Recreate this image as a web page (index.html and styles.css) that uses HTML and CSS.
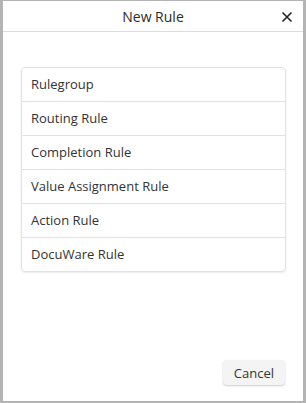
FILE: index.html
```html
<!DOCTYPE html>
<html lang="en">
<head>
    <meta charset="UTF-8">
    <meta name="viewport" content="width=device-width, initial-scale=1.0">
    <title>New Rule</title>
    <link rel="stylesheet" href="styles.css">
</head>
<body>
<div class="dialog">
    <div class="dialog-header">
        <span class="dialog-title">New Rule</span>
        <button class="close-button" title="Close">
            <svg width="12" height="12" viewBox="0 0 12 12"><path d="M1.5 1.5 L10.5 10.5 M10.5 1.5 L1.5 10.5" stroke="#222" stroke-width="1.6" fill="none"/></svg>
        </button>
    </div>

    <div class="dialog-body">
        <ul class="rule-list">
            <li>Rulegroup</li>
            <li>Routing Rule</li>
            <li>Completion Rule</li>
            <li>Value Assignment Rule</li>
            <li>Action Rule</li>
            <li>DocuWare Rule</li>
        </ul>
    </div>

    <div class="dialog-footer">
        <button class="cancel-button">Cancel</button>
    </div>
</div>
</body>
</html>
```

FILE: styles.css
```css
html, body { height: 100%; }
body { margin: 0; background: #b4b4b4; font-family: "Open Sans", Arial, sans-serif; color: #333; box-sizing: border-box; padding: 1px 3px 2px 3px; }
.dialog { height: 100%; background: #fff; display: flex; flex-direction: column; }
.dialog-header {
    position: relative;
    height: 30px;
    border-bottom: 1px solid #dcdcdc;
    display: flex;
    align-items: center;
    justify-content: center;
}
.dialog-title { font-size: 14px; font-weight: 400; color: #2b2b2b; }
.close-button {
    position: absolute;
    right: 8px;
    top: 8px;
    width: 16px;
    height: 16px;
    padding: 0;
    border: none;
    background: none;
    display: flex;
    align-items: center;
    justify-content: center;
    cursor: pointer;
}
.dialog-body { flex: 1; padding: 35px 17px 0 18px; }
.rule-list {
    list-style: none;
    margin: 0;
    padding: 0;
    border: 1px solid #e2e2e2;
    border-radius: 4px;
    box-shadow: 0 1px 2px rgba(0, 0, 0, 0.08);
}
.rule-list li {
    height: 33px;
    line-height: 33px;
    padding: 0 9px;
    font-size: 13px;
    border-bottom: 1px solid #e2e2e2;
    cursor: pointer;
}
.rule-list li:last-child { border-bottom: none; }
.dialog-footer { display: flex; justify-content: flex-end; padding: 0 18px 16px 0; }
.cancel-button {
    font-family: "Open Sans", Arial, sans-serif;
    font-size: 13px;
    color: #333;
    height: 25px;
    padding: 0 11px;
    background: #f4f4f4;
    border: none;
    border-radius: 4px;
    box-shadow: 0 1px 2px rgba(0, 0, 0, 0.2);
    cursor: pointer;
}
```
